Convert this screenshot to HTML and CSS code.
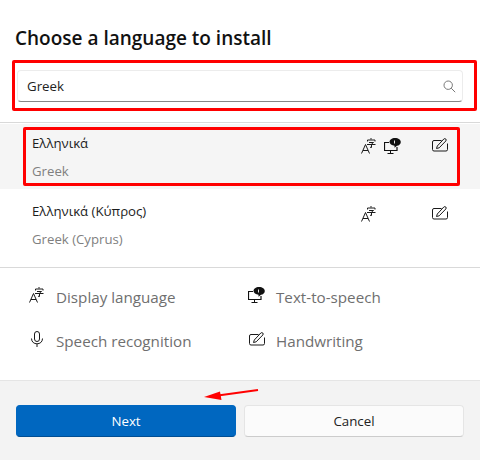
FILE: index.html
```html
<html>
  <head>
    <link rel="stylesheet" href="styles.css">
  </head>
  <body>
    <svg class="defs" width="0" height="0">
      <symbol id="ic-lang" viewBox="0 0 15 16">
        <path d="M0.5 15.5 L4.5 6.5 L8.5 15.5 M2 12.5 H7" fill="none" stroke="#1a1a1a" stroke-width="1"/>
        <path d="M10 0 V1.5 M6.5 3.5 V2 H14 V3.5 M8 4.5 H12.5 L10.5 6 V9.5 L9 9.2 M6 6.5 H14.5" fill="none" stroke="#1a1a1a" stroke-width="1"/>
      </symbol>
      <symbol id="ic-tts" viewBox="0 0 17 16">
        <path d="M5 4.5 H0.5 V12.5 H13 V9" fill="none" stroke="#111" stroke-width="1.2"/>
        <path d="M6.5 12.5 V15 M3.5 15.5 H9.5" fill="none" stroke="#111" stroke-width="1"/>
        <path d="M11 0 C14.5 0 16.8 1.7 16.8 4 C16.8 6.2 15 7.5 13 7.8 L10.5 9.8 V7.7 C7.8 7.3 5.5 6 5.5 4 C5.5 1.7 7.8 0 11 0 Z" fill="#111"/>
        <path d="M10.5 2.5 V5.5" stroke="#fff" stroke-width="0.9"/>
      </symbol>
      <symbol id="ic-hand" viewBox="0 0 16 14">
        <path d="M9.5 2.5 H2 Q0.5 2.5 0.5 4 V11.5 Q0.5 13 2 13 H14 Q15.5 13 15.5 11.5 V5.5" fill="none" stroke="#1a1a1a" stroke-width="1"/>
        <path d="M4.5 10.5 L5.3 8 L11.8 1 Q12.8 0.2 13.8 1 Q14.6 2 13.8 3 L7.2 9.8 Z" fill="none" stroke="#1a1a1a" stroke-width="1"/>
      </symbol>
      <symbol id="ic-mic" viewBox="0 0 12 16">
        <rect x="3.5" y="0.5" width="5" height="10" rx="2.5" fill="none" stroke="#1a1a1a" stroke-width="1"/>
        <path d="M0.5 7.5 C0.5 11 3 12.8 6 12.8 C9 12.8 11.5 11 11.5 7.5 M6 13 V16" fill="none" stroke="#1a1a1a" stroke-width="1"/>
      </symbol>
    </svg>

    <div class="dialog">
      <div class="content">
        <h1 class="title">Choose a language to install</h1>
        <div class="search">
          <span class="search-text">Greek</span>
          <svg class="search-icon" width="13" height="13" viewBox="0 0 13 13">
            <circle cx="5.2" cy="5.2" r="4.2" fill="none" stroke="#777" stroke-width="1"/>
            <path d="M8.2 8.2 L12.2 12.2" stroke="#777" stroke-width="1"/>
          </svg>
        </div>

        <div class="list">
          <div class="lang-row selected">
            <div class="lang-names">
              <div class="lang-native">Ελληνικά</div>
              <div class="lang-english">Greek</div>
            </div>
            <div class="lang-icons">
              <svg class="i-lang"><use href="#ic-lang"/></svg>
              <svg class="i-tts"><use href="#ic-tts"/></svg>
              <svg class="i-hand"><use href="#ic-hand"/></svg>
            </div>
          </div>
          <div class="lang-row">
            <div class="lang-names">
              <div class="lang-native">Ελληνικά (Κύπρος)</div>
              <div class="lang-english">Greek (Cyprus)</div>
            </div>
            <div class="lang-icons">
              <svg class="i-lang"><use href="#ic-lang"/></svg>
              <span class="i-tts"></span>
              <svg class="i-hand"><use href="#ic-hand"/></svg>
            </div>
          </div>
        </div>

        <div class="legend">
          <div class="legend-item">
            <span class="legend-icon"><svg class="i-lang"><use href="#ic-lang"/></svg></span>
            Display language
          </div>
          <div class="legend-item">
            <span class="legend-icon"><svg class="i-tts"><use href="#ic-tts"/></svg></span>
            Text-to-speech
          </div>
          <div class="legend-item">
            <span class="legend-icon"><svg class="i-mic"><use href="#ic-mic"/></svg></span>
            Speech recognition
          </div>
          <div class="legend-item">
            <span class="legend-icon"><svg class="i-hand"><use href="#ic-hand"/></svg></span>
            Handwriting
          </div>
        </div>
      </div>

      <div class="footer">
        <button class="btn primary">Next</button>
        <button class="btn">Cancel</button>
      </div>

      <!-- annotations drawn over the dialog -->
      <div class="mark mark-search"></div>
      <div class="mark mark-row"></div>
      <svg class="mark-arrow" width="60" height="14" viewBox="0 0 60 14">
        <path d="M54 2 L14 7.5" stroke="#f00" stroke-width="2"/>
        <path d="M0 9 L16 3.5 L17.5 12 Z" fill="#f00"/>
      </svg>
    </div>
  </body>
</html>
```

FILE: styles.css
```css
body {
  font-family: "Open Sans", "Noto Sans", sans-serif;
  margin: 0;
  background: #fff;
  color: #1a1a1a;
}
.defs {
  display: block;
  height: 0;
}
.dialog {
  position: relative;
  width: 480px;
  height: 460px;
  display: flex;
  flex-direction: column;
  overflow: hidden;
}
.content {
  flex: 1;
}
.title {
  margin: 0;
  padding: 25px 16px 0 15px;
  font-size: 19px;
  line-height: 26px;
  font-weight: 600;
  color: #111;
}
.search {
  display: flex;
  align-items: center;
  justify-content: space-between;
  height: 32px;
  margin: 19px 17px 0 17px;
  padding: 0 6px 0 9px;
  box-sizing: border-box;
  background: #fff;
  border: 1px solid #ececec;
  border-bottom: 1px solid #868686;
  border-radius: 4px;
  font-size: 13.3px;
}
.search-text {
  color: #222;
}
.list {
  margin-top: 20px;
  border-top: 1px solid #d9d9d9;
  border-bottom: 1px solid #d9d9d9;
}
.lang-row {
  display: flex;
  justify-content: space-between;
  height: 65px;
  padding: 0 32px;
  box-sizing: border-box;
}
.lang-row + .lang-row {
  height: 78px;
  padding-top: 3px;
}
.selected {
  background: #f5f5f5;
  margin-top: 1px;
}
.lang-native {
  margin-top: 10px;
  font-size: 13.2px;
  line-height: 18px;
  color: #1c1c1c;
}
.lang-english {
  margin-top: 10px;
  font-size: 13.2px;
  line-height: 18px;
  color: #7f7f7f;
}
.lang-icons {
  display: flex;
  align-items: flex-start;
  gap: 8px;
  padding-top: 14px;
}
.i-lang {
  width: 15px;
  height: 16px;
}
.i-tts {
  width: 17px;
  height: 16px;
}
.i-hand {
  width: 16px;
  height: 14px;
  margin-left: 23px;
}
.i-mic {
  width: 12px;
  height: 16px;
}
.legend {
  display: grid;
  grid-template-columns: 220px 1fr;
  padding: 14px 0 0 28px;
  row-gap: 14px;
}
.legend-item {
  display: flex;
  align-items: center;
  height: 30px;
  font-size: 15.2px;
  color: #6f6f6f;
}
.legend-icon {
  display: flex;
  justify-content: center;
  width: 17px;
  margin-right: 11px;
  margin-bottom: 4px;
}
.legend-icon .i-hand {
  margin-left: 0;
}
.footer {
  display: flex;
  gap: 8px;
  height: 80px;
  padding: 24px 16px 0;
  box-sizing: border-box;
  background: #f3f3f3;
  border-top: 1px solid #e5e5e5;
}
.btn {
  flex: 1;
  height: 32px;
  padding: 0;
  border: 1px solid #e5e5e5;
  border-bottom-color: #cccccc;
  border-radius: 4px;
  background: #fbfbfb;
  font-family: inherit;
  font-size: 13.3px;
  color: #222;
}
.primary {
  background: #0067c0;
  border-color: #0067c0;
  border-bottom-color: #004e93;
  color: #fff;
}
.mark {
  position: absolute;
  box-sizing: border-box;
  border: 3px solid #f00;
  border-radius: 2px;
}
.mark-search {
  left: 12px;
  top: 60px;
  width: 465px;
  height: 51px;
}
.mark-row {
  left: 23px;
  top: 127px;
  width: 437px;
  height: 59px;
}
.mark-arrow {
  position: absolute;
  left: 204px;
  top: 388px;
}
```
